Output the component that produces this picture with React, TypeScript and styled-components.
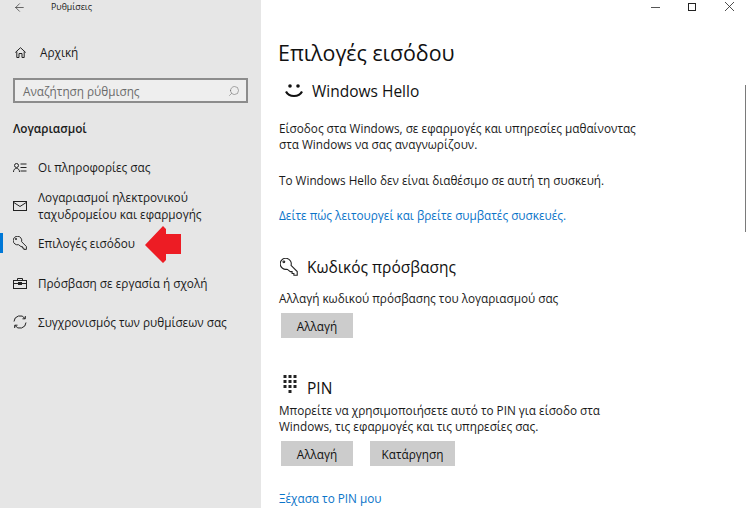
import React from "react";
import styled, { createGlobalStyle } from "styled-components";
import { ArrowLeft, Search } from "lucide-react";

const GlobalStyle = createGlobalStyle`
  html, body {
    margin: 0;
    padding: 0;
    width: 746px;
    height: 508px;
    overflow: hidden;
    background: #fff;
  }
  * {
    box-sizing: border-box;
  }
`;

function HomeIcon() {
  return (
    <svg width="11" height="11" viewBox="0 0 11 11" fill="none" stroke="#222" strokeWidth="1">
      <path d="M0.300 5.500 L5.500 0.700 L10.700 5.500" />
      <path d="M1.800 4.500 V10.500 H4 V6.500 H7 V10.500 H9.200 V4.500" />
    </svg>
  );
}

function InfoIcon() {
  return (
    <svg width="14" height="10" viewBox="0 0 14 10" fill="none" stroke="#222" strokeWidth="1">
      <circle cx="3.500" cy="2.500" r="2" />
      <path d="M0.500 9c0-2.400 1.300-3.600 3-3.600s3 1.200 3 3.600" />
      <path d="M7.500 1h6M7.500 4.500h6M7.500 8h6" />
    </svg>
  );
}

function MailIcon() {
  return (
    <svg width="14" height="10" viewBox="0 0 14 10" fill="none" stroke="#222" strokeWidth="1">
      <rect x="0.500" y="0.500" width="13" height="9" />
      <path d="M0.800 1.500 L7 5.500 L13.200 1.500" />
    </svg>
  );
}

function KeyIcon({ size }: { size: number }) {
  return (
    <svg width={size} height={size} viewBox="0 0 14 14" fill="none" stroke="#222" strokeWidth={size > 14 ? 0.85 : 0.95}>
      <path d="M5.500 8.700 A4.300 4.300 0 1 1 8.600 5.700 L13.400 10.500 V13.400 H10.800 V12 H9.400 V10.600 H8 L5.500 8.700" />
      <circle cx="3" cy="3" r="0.700" />
    </svg>
  );
}

function BriefcaseIcon() {
  return (
    <svg width="14" height="11" viewBox="0 0 14 11" fill="none" stroke="#222" strokeWidth="1">
      <rect x="0.500" y="2.500" width="13" height="8" />
      <path d="M4.500 2.500 V0.500 H9.500 V2.500" />
      <path d="M0.500 5.500 H5.500 M8.500 5.500 H13.500" />
      <rect x="5.500" y="4.500" width="3" height="2" fill="#222" />
    </svg>
  );
}

function SyncIcon() {
  return (
    <svg width="14" height="14" viewBox="0 0 14 14" fill="none" stroke="#222" strokeWidth="1">
      <path d="M1 6.500 A6 6 0 0 1 12 3.500" />
      <path d="M12.300 1 V3.800 H9.500" />
      <path d="M13 7.500 A6 6 0 0 1 2 10.500" />
      <path d="M1.700 13 V10.200 H4.500" />
    </svg>
  );
}

function SmileIcon() {
  return (
    <svg width="18" height="14" viewBox="0 0 18 14" fill="#111">
      <circle cx="5" cy="2" r="1.800" />
      <circle cx="13" cy="2" r="1.800" />
      <path d="M1 7.500c1.500 3 4.400 4.500 8 4.500s6.500-1.500 8-4.500" fill="none" stroke="#111" strokeWidth="2.200" />
    </svg>
  );
}

function PinIcon() {
  const rows = [
    [0, 1, 2],
    [0, 1, 2],
    [0, 1, 2],
    [1],
  ];
  return (
    <svg width="14" height="18" viewBox="0 0 14 18" fill="#222">
      {rows.map((cols, row) =>
        cols.map((col) => (
          <rect key={`${row}-${col}`} x={col * 5 + 0.500} y={row * 5} width="3" height="3" />
        )),
      )}
    </svg>
  );
}

function MinimizeIcon() {
  return (
    <svg width="9" height="9" viewBox="0 0 9 9" stroke="#555" strokeWidth="1">
      <path d="M0 5.500H9" />
    </svg>
  );
}

function MaximizeIcon() {
  return (
    <svg width="9" height="9" viewBox="0 0 9 9" fill="none" stroke="#222" strokeWidth="1">
      <rect x="0.500" y="1.500" width="7" height="7" />
    </svg>
  );
}

function CloseIcon() {
  return (
    <svg width="9" height="9" viewBox="0 0 9 9" stroke="#222" strokeWidth="0.800">
      <path d="M0 0L9 9M9 0L0 9" />
    </svg>
  );
}

const navItems = [
  { id: "info", icon: <InfoIcon />, label: "Οι πληροφορίες σας", height: 39 },
  { id: "mail", icon: <MailIcon />, label: "Λογαριασμοί ηλεκτρονικού ταχυδρομείου και εφαρμογής", height: 38 },
  { id: "signin", icon: <KeyIcon size={14} />, label: "Επιλογές εισόδου", height: 36, active: true },
  { id: "work", icon: <BriefcaseIcon />, label: "Πρόσβαση σε εργασία ή σχολή", height: 44 },
  { id: "sync", icon: <SyncIcon />, label: "Συγχρονισμός των ρυθμίσεων σας", height: 34 },
];

const App: React.FC = () => {
  return (
    <>
      <GlobalStyle />
      <Page>
        <Sidebar>
          <TitleRow>
            <ArrowLeft size={13} strokeWidth={1.2} color="#222" />
            <AppName>Ρυθμίσεις</AppName>
          </TitleRow>
          <HomeRow>
            <HomeIcon />
            <span>Αρχική</span>
          </HomeRow>
          <SearchBox>
            <span>Αναζήτηση ρύθμισης</span>
            <FlippedSearch size={12} strokeWidth={1.1} color="#666" />
          </SearchBox>
          <GroupTitle>Λογαριασμοί</GroupTitle>
          <NavList>
            {navItems.map((item) => (
              <NavItem key={item.id} $active={item.active} $height={item.height}>
                <NavIcon>{item.icon}</NavIcon>
                <NavLabel>{item.label}</NavLabel>
              </NavItem>
            ))}
          </NavList>
          <RedArrow width="37" height="38" viewBox="0 0 37 38">
            <path d="M18 0 L21 3 V8 H36 V28 H21 V34 L18 37 L0 19 Z" fill="#ed1c24" />
          </RedArrow>
        </Sidebar>
        <Main>
          <WindowControls>
            <MinimizeIcon />
            <MaximizeIcon />
            <CloseIcon />
          </WindowControls>
          <PageTitle>Επιλογές εισόδου</PageTitle>
          <HelloHeading>
            <SmileIcon />
            <span>Windows Hello</span>
          </HelloHeading>
          <Paragraph $top={16}>
            Είσοδος στα Windows, σε εφαρμογές και υπηρεσίες μαθαίνοντας
            <br />
            στα Windows να σας αναγνωρίζουν.
          </Paragraph>
          <Paragraph $top={20}>Το Windows Hello δεν είναι διαθέσιμο σε αυτή τη συσκευή.</Paragraph>
          <TextLink $top={19}>Δείτε πώς λειτουργεί και βρείτε συμβατές συσκευές.</TextLink>
          <KeyHeading>
            <KeyIcon size={18} />
            <span>Κωδικός πρόσβασης</span>
          </KeyHeading>
          <Paragraph $top={11}>Αλλαγή κωδικού πρόσβασης του λογαριασμού σας</Paragraph>
          <ButtonRow $top={7}>
            <GreyButton>Αλλαγή</GreyButton>
          </ButtonRow>
          <PinHeading>
            <PinIcon />
            <span>PIN</span>
          </PinHeading>
          <Paragraph $top={5}>
            Μπορείτε να χρησιμοποιήσετε αυτό το PIN για είσοδο στα
            <br />
            Windows, τις εφαρμογές και τις υπηρεσίες σας.
          </Paragraph>
          <ButtonRow $top={7}>
            <GreyButton>Αλλαγή</GreyButton>
            <GreyButton $wide>Κατάργηση</GreyButton>
          </ButtonRow>
          <TextLink $top={24}>Ξέχασα το PIN μου</TextLink>
          <ScrollThumb />
        </Main>
      </Page>
    </>
  );
};

const Page = styled.div`
  display: flex;
  width: 746px;
  height: 508px;
  overflow: hidden;
  font-family: "Open Sans", "Noto Sans", sans-serif;
  font-size: 11.750px;
  color: #1a1a1a;
`;
const Sidebar = styled.aside`
  position: relative;
  display: flex;
  flex-direction: column;
  flex: 0 0 261px;
  background: #e6e6e6;
`;
const TitleRow = styled.div`
  display: flex;
  align-items: center;
  height: 14px;
  padding-left: 13px;
`;
const AppName = styled.span`
  margin-left: 25px;
  font-size: 8.800px;
`;
const HomeRow = styled.div`
  display: flex;
  align-items: center;
  gap: 14px;
  margin-top: 29px;
  padding-left: 15px;
  height: 18px;
`;
const SearchBox = styled.div`
  display: flex;
  align-items: center;
  justify-content: space-between;
  width: 235px;
  height: 25px;
  margin: 17px 0 0 13px;
  padding: 0 6px 0 8px;
  border: 2px solid #8c8c8c;
  background: #eeeeee;
  color: #6b6b6b;
`;
const FlippedSearch = styled(Search)`
  transform: scaleX(-1);
`;
const GroupTitle = styled.div`
  margin: 16px 0 0 13px;
  font-weight: 600;
  height: 18px;
  line-height: 18px;
`;
const NavList = styled.nav`
  display: flex;
  flex-direction: column;
  margin-top: 11px;
`;
const NavItem = styled.div<{ $active?: boolean; $height: number }>`
  position: relative;
  display: flex;
  align-items: center;
  height: ${(p) => p.$height}px;
  padding-left: 13px;
  &::before {
    content: "";
    display: ${(p) => (p.$active ? "block" : "none")};
    position: absolute;
    left: 0;
    top: 8px;
    width: 3px;
    height: 20px;
    background: #0078d7;
  }
`;
const NavIcon = styled.span`
  display: flex;
  flex: 0 0 14px;
`;
const NavLabel = styled.span`
  margin-left: 11px;
  width: 205px;
  line-height: 17px;
`;
const RedArrow = styled.svg`
  position: absolute;
  left: 145px;
  top: 226px;
`;
const Main = styled.main`
  position: relative;
  flex: 1;
  padding: 0 0 0 17px;
  display: flex;
  flex-direction: column;
  align-items: flex-start;
`;
const WindowControls = styled.div`
  position: absolute;
  top: 2px;
  right: 12px;
  display: flex;
  gap: 28px;
`;
const PageTitle = styled.h1`
  margin: 38px 0 0 0;
  font-size: 21.400px;
  font-weight: 400;
  line-height: 30px;
  color: #111;
`;
const Heading = styled.h2`
  display: flex;
  margin: 0;
  font-size: 15.500px;
  font-weight: 400;
  color: #111;
`;
const HelloHeading = styled(Heading)`
  align-items: center;
  gap: 9px;
  margin: 10px 0 0 7px;
  height: 26px;
`;
const KeyHeading = styled(Heading)`
  align-items: center;
  gap: 9px;
  margin: 32px 0 0 2px;
  height: 24px;
`;
const PinHeading = styled(Heading)`
  gap: 10px;
  margin: 32px 0 0 5px;
  height: 27px;
  svg {
    margin-top: 5px;
  }
  span {
    margin-top: 10px;
    line-height: 17px;
  }
`;
const Paragraph = styled.p<{ $top: number }>`
  margin: ${(p) => p.$top}px 0 0 1px;
  line-height: 16px;
`;
const TextLink = styled.a<{ $top: number }>`
  display: block;
  margin: ${(p) => p.$top}px 0 0 1px;
  line-height: 16px;
  color: #0a74c9;
`;
const ButtonRow = styled.div<{ $top: number }>`
  display: flex;
  gap: 17px;
  margin: ${(p) => p.$top}px 0 0 3px;
`;
const GreyButton = styled.div<{ $wide?: boolean }>`
  display: flex;
  align-items: center;
  justify-content: center;
  width: ${(p) => (p.$wide ? 85 : 72)}px;
  height: 25px;
  background: #cccccc;
  color: #111;
`;
const ScrollThumb = styled.div`
  position: absolute;
  right: 0;
  top: 85px;
  width: 1px;
  height: 147px;
  background: #7a7a7a;
`;

export default App;
